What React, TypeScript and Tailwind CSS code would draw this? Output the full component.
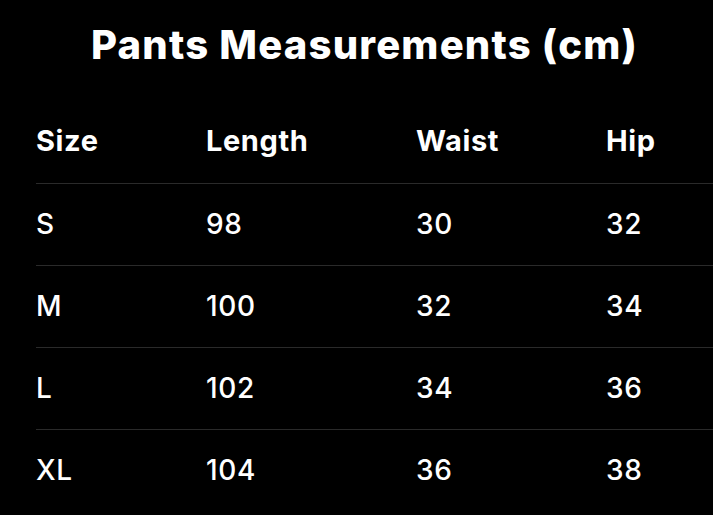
export default function App() {
  const rows = [
    ["S", "98", "30", "32"],
    ["M", "100", "32", "34"],
    ["L", "102", "34", "36"],
    ["XL", "104", "36", "38"],
  ];
  return (
    <div
      className="w-[713px] h-[515px] bg-black text-white overflow-hidden"
      style={{ fontFamily: "Inter, 'Noto Sans', sans-serif" }}
    >
      <div className="h-[101px] flex items-start justify-center pt-[21px] pl-[16px]">
        <h1 className="text-[40px] leading-[48px] font-extrabold tracking-[1.2px]">
          Pants Measurements (cm)
        </h1>
      </div>
      <div className="ml-[36px]">
        <div className="grid grid-cols-[170px_210px_190px_1fr] h-[83px] items-center border-b border-[#2a2a2a] pb-[2px] text-[29px] font-bold tracking-[0.6px]">
          <div>Size</div>
          <div>Length</div>
          <div>Waist</div>
          <div>Hip</div>
        </div>
        {rows.map((r, i) => (
          <div
            key={i}
            className={`grid grid-cols-[170px_210px_190px_1fr] h-[82px] items-center pb-[2px] text-[28px] font-medium tracking-[0.6px] ${
              i < rows.length - 1 ? "border-b border-[#2a2a2a]" : ""
            }`}
          >
            {r.map((c, j) => (
              <div key={j}>{c}</div>
            ))}
          </div>
        ))}
      </div>
    </div>
  );
}
